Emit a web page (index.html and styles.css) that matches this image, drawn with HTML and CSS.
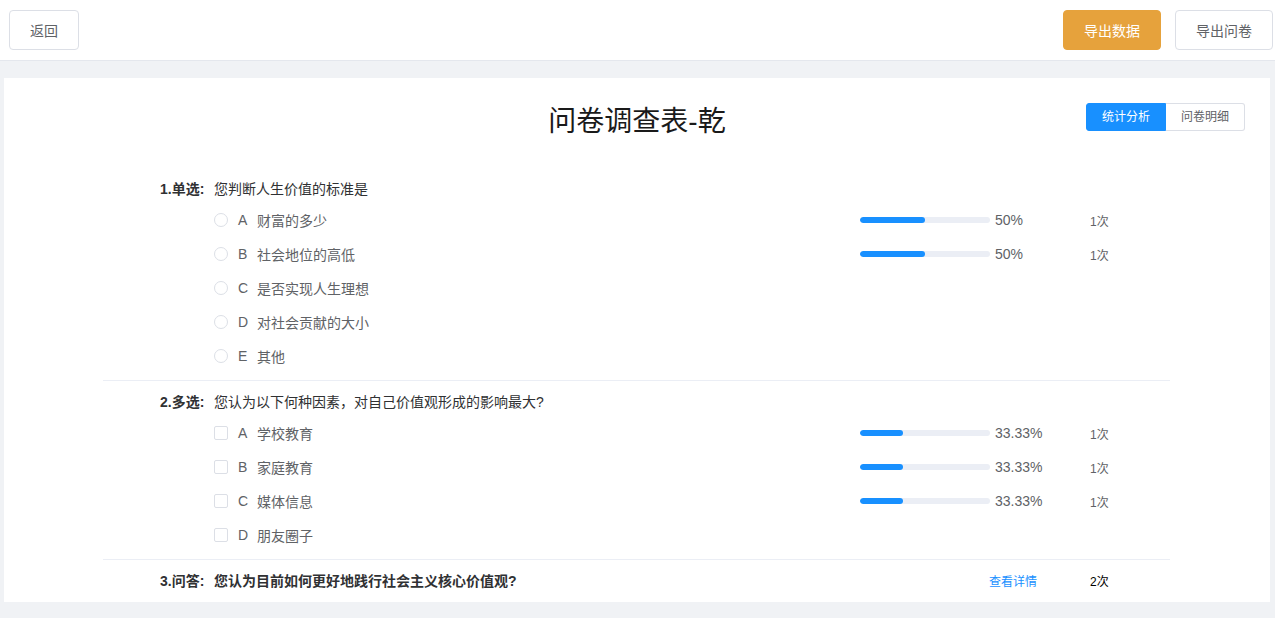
FILE: index.html
```html
<!DOCTYPE html>
<html>
<head>
    <meta charset="utf-8">
    <!-- Add style/CSS -->
    <link rel="stylesheet" href="styles.css">
</head>
<body>
    <!-- Top bar -->
    <div class="topbar">
        <button class="btn">返回</button>
        <div class="topbar-right">
            <button class="btn btn-warning">导出数据</button>
            <button class="btn">导出问卷</button>
        </div>
    </div>

    <div class="page">
        <div class="card">
            <div class="card-head">
                <span></span>
                <h1 class="title">问卷调查表-乾</h1>
                <div class="tabs">
                    <span class="tab active">统计分析</span>
                    <span class="tab">问卷明细</span>
                </div>
            </div>

            <div class="questions">
                <!-- Question 1 -->
                <div class="question">
                    <div class="q-title">
                        <span class="q-label">1.单选:</span>
                        <span class="q-text">您判断人生价值的标准是</span>
                    </div>
                    <div class="option">
                        <div class="opt-label"><i class="radio"></i><span class="letter">A</span>财富的多少</div>
                        <div class="bar"><div class="bar-fill" style="width: 50%"></div></div>
                        <span class="percent">50%</span>
                        <span class="count">1次</span>
                    </div>
                    <div class="option">
                        <div class="opt-label"><i class="radio"></i><span class="letter">B</span>社会地位的高低</div>
                        <div class="bar"><div class="bar-fill" style="width: 50%"></div></div>
                        <span class="percent">50%</span>
                        <span class="count">1次</span>
                    </div>
                    <div class="option">
                        <div class="opt-label"><i class="radio"></i><span class="letter">C</span>是否实现人生理想</div>
                    </div>
                    <div class="option">
                        <div class="opt-label"><i class="radio"></i><span class="letter">D</span>对社会贡献的大小</div>
                    </div>
                    <div class="option">
                        <div class="opt-label"><i class="radio"></i><span class="letter">E</span>其他</div>
                    </div>
                </div>

                <!-- Question 2 -->
                <div class="question">
                    <div class="q-title">
                        <span class="q-label">2.多选:</span>
                        <span class="q-text">您认为以下何种因素，对自己价值观形成的影响最大?</span>
                    </div>
                    <div class="option">
                        <div class="opt-label"><i class="checkbox"></i><span class="letter">A</span>学校教育</div>
                        <div class="bar"><div class="bar-fill" style="width: 33.33%"></div></div>
                        <span class="percent">33.33%</span>
                        <span class="count">1次</span>
                    </div>
                    <div class="option">
                        <div class="opt-label"><i class="checkbox"></i><span class="letter">B</span>家庭教育</div>
                        <div class="bar"><div class="bar-fill" style="width: 33.33%"></div></div>
                        <span class="percent">33.33%</span>
                        <span class="count">1次</span>
                    </div>
                    <div class="option">
                        <div class="opt-label"><i class="checkbox"></i><span class="letter">C</span>媒体信息</div>
                        <div class="bar"><div class="bar-fill" style="width: 33.33%"></div></div>
                        <span class="percent">33.33%</span>
                        <span class="count">1次</span>
                    </div>
                    <div class="option">
                        <div class="opt-label"><i class="checkbox"></i><span class="letter">D</span>朋友圈子</div>
                    </div>
                </div>

                <!-- Question 3 -->
                <div class="question">
                    <div class="q-title q-answer">
                        <span class="q-label">3.问答:</span>
                        <span class="q-text">您认为目前如何更好地践行社会主义核心价值观?</span>
                        <a class="detail">查看详情</a>
                        <span class="total">2次</span>
                    </div>
                </div>
            </div>
        </div>
    </div>
</body>
</html>
```

FILE: styles.css
```css
body {
    margin: 0;
    background: #f0f2f5;
    font-family: "Liberation Sans", "Noto Sans CJK SC", sans-serif;
    color: #303133;
}

/* Top bar */
.topbar {
    display: flex;
    justify-content: space-between;
    align-items: center;
    height: 60px;
    padding: 0 2px 0 9px;
    background: #fff;
    border-bottom: 1px solid #e4e7ed;
}
.topbar-right {
    display: flex;
    gap: 14px;
}
.btn {
    height: 40px;
    padding: 0 20px;
    min-width: 70px;
    border: 1px solid #dcdfe6;
    border-radius: 4px;
    background: #fff;
    color: #606266;
    font-family: inherit;
    font-size: 14px;
    cursor: pointer;
}
.topbar-right .btn {
    width: 98px;
}
.btn-warning {
    background: #e6a23c;
    border-color: #e6a23c;
    color: #fff;
}

/* Card */
.page {
    padding: 17px 5px 16px 4px;
}
.card {
    background: #fff;
}
.card-head {
    display: grid;
    grid-template-columns: 1fr auto 1fr;
    align-items: start;
    padding: 24px 25px 0;
    margin-bottom: 26px;
}
.title {
    margin: 0;
    font-size: 28px;
    line-height: 40px;
    font-weight: normal;
    color: #1a1a1a;
}
.tabs {
    justify-self: end;
    display: flex;
    margin-top: 1px;
}
.tab {
    width: 80px;
    height: 28px;
    line-height: 26px;
    box-sizing: border-box;
    text-align: center;
    font-size: 12px;
    color: #606266;
    border: 1px solid #dcdfe6;
    border-left: none;
}
.tab:first-child {
    border-left: 1px solid #dcdfe6;
    border-radius: 3px 0 0 3px;
}
.tab:last-child {
    border-radius: 0 3px 3px 0;
    width: 79px;
}
.tab.active {
    background: #1890ff;
    border-color: #1890ff;
    color: #fff;
}

/* Questions */
.questions {
    margin: 0 100px 0 99px;
}
.question {
    padding: 5px 0 7px 57px;
    border-bottom: 1px solid #ebeef5;
}
.question:last-child {
    border-bottom: none;
}
.q-title {
    display: flex;
    align-items: center;
    height: 30px;
    font-size: 14px;
}
.q-label {
    width: 54px;
    font-weight: bold;
}
.q-answer {
    font-weight: bold;
}
.q-answer .q-text {
    width: 775px;
}
.detail {
    width: 101px;
    font-size: 12px;
    font-weight: normal;
    color: #1890ff;
    cursor: pointer;
}
.total {
    font-size: 12px;
    font-weight: normal;
    color: #000;
}

.option {
    display: flex;
    align-items: center;
    height: 34px;
    padding-left: 54px;
    font-size: 14px;
    color: #606266;
}
.opt-label {
    display: flex;
    align-items: center;
    width: 646px;
}
.radio,
.checkbox {
    width: 12px;
    height: 12px;
    border: 1px solid #dcdfe6;
    margin-right: 10px;
}
.radio {
    border-radius: 50%;
}
.checkbox {
    border-radius: 2px;
}
.letter {
    width: 19px;
}
.bar {
    width: 130px;
    height: 6px;
    border-radius: 3px;
    background: #ebeef5;
    margin-right: 5px;
    overflow: hidden;
}
.bar-fill {
    height: 100%;
    border-radius: 3px;
    background: #1890ff;
}
.percent {
    width: 95px;
    font-size: 14px;
}
.count {
    font-size: 12px;
    color: #606266;
}
```
